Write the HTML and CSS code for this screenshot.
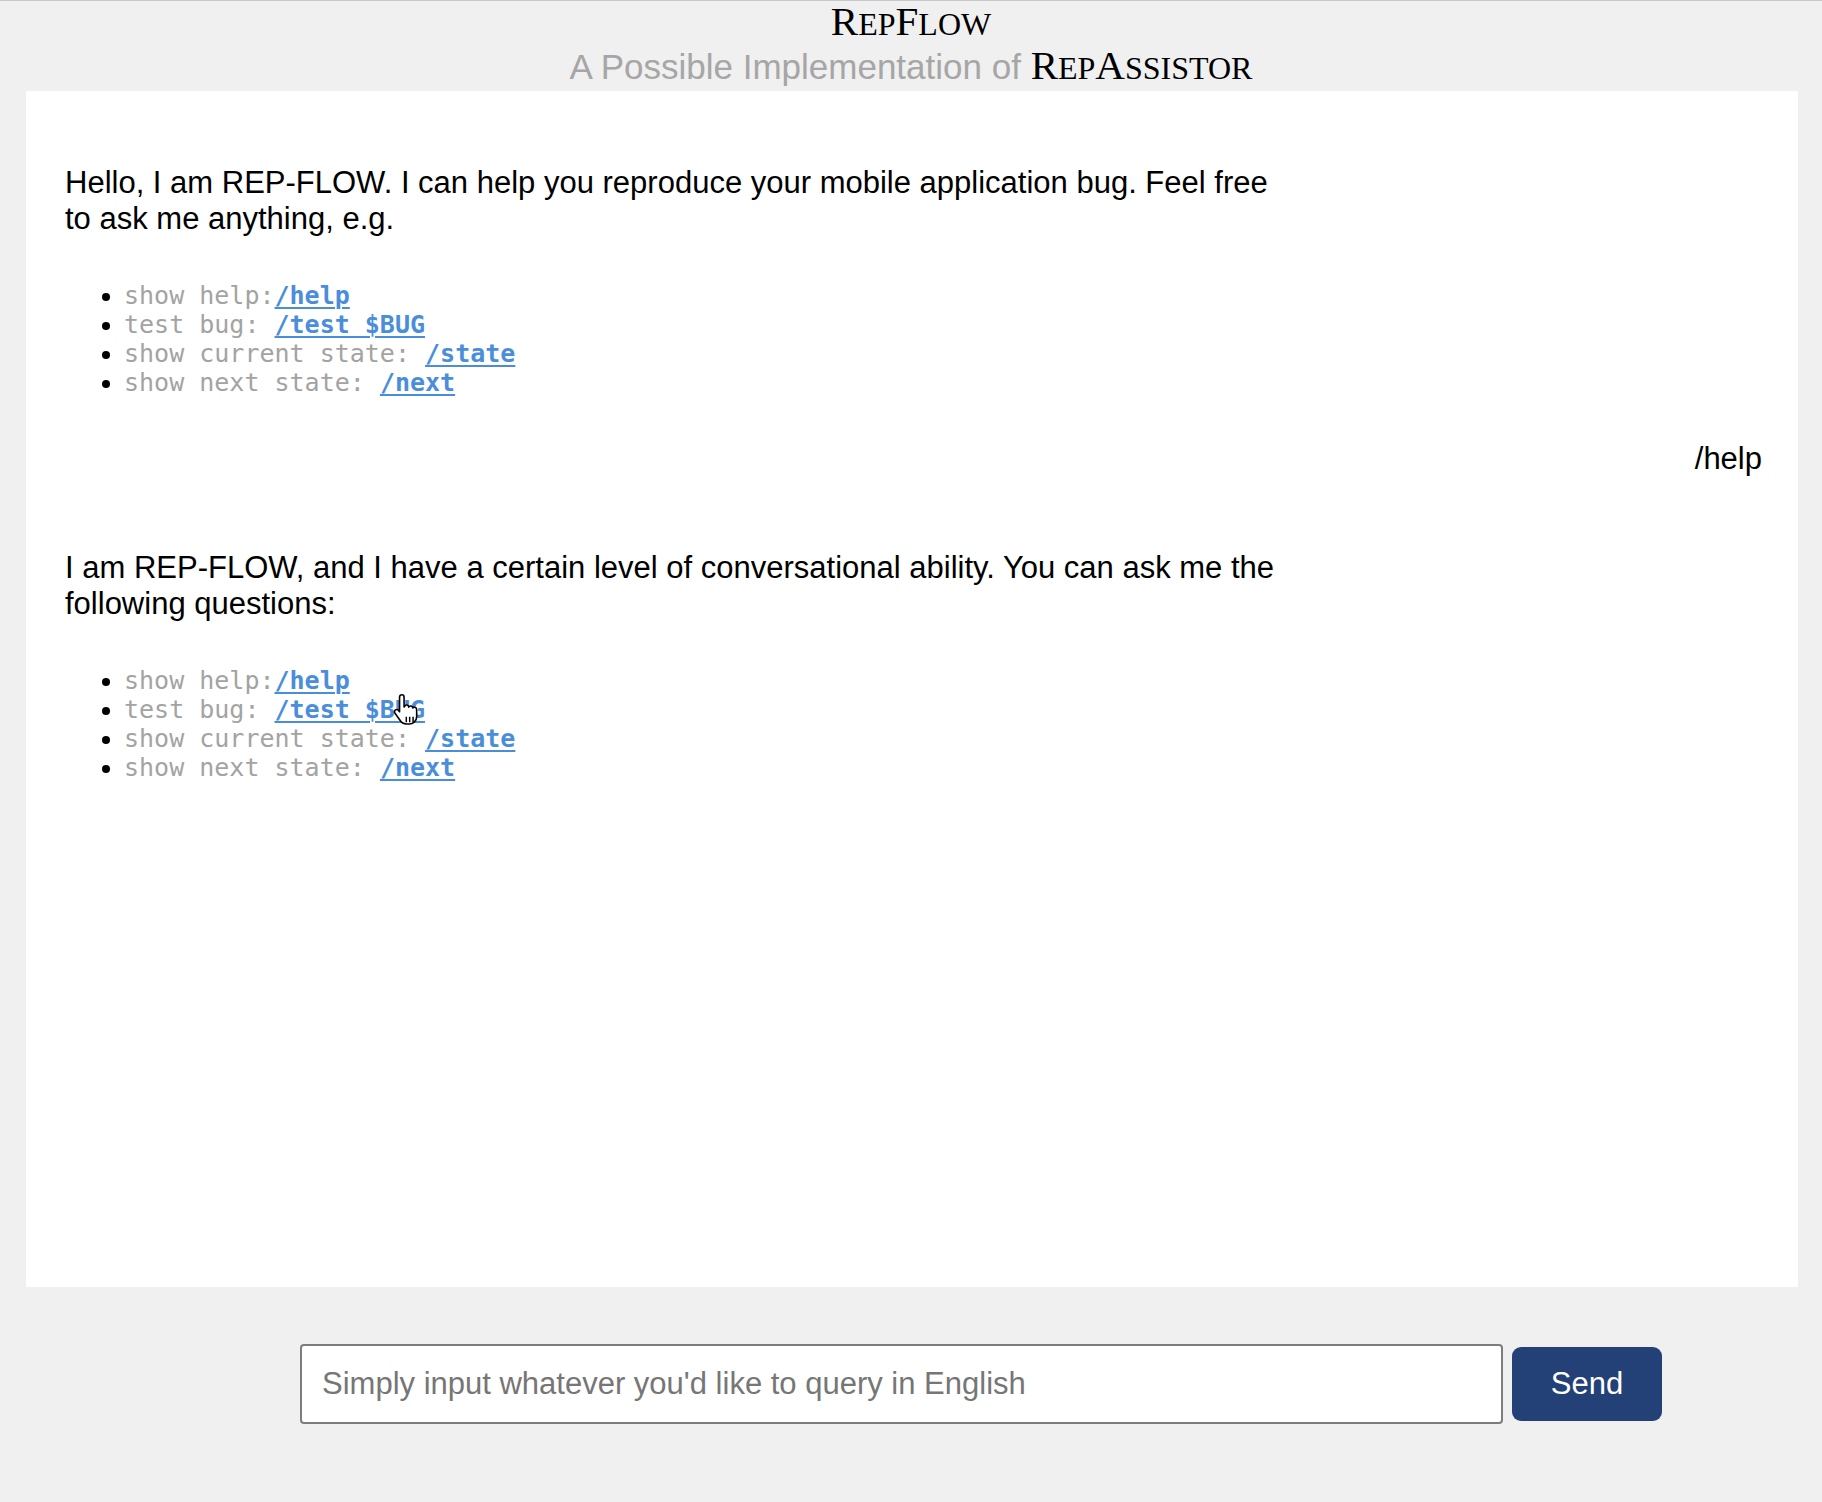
FILE: index.html
```html
<!DOCTYPE html>
<html lang="en">
<head>
<meta charset="utf-8">
<title>RepFlow</title>
<link rel="stylesheet" href="styles.css">
</head>
<body>
<header class="top">
  <div class="title">R<span class="sc">ep</span>F<span class="sc">low</span></div>
  <div class="subtitle"><span class="sub-sans">A Possible Implementation of</span> <span class="brand">R<span class="sc">ep</span>A<span class="sc">ssistor</span></span></div>
</header>

<main class="chat">
  <div class="msg bot">
    <p>Hello, I am REP-FLOW. I can help you reproduce your mobile application bug. Feel free to ask me anything, e.g.</p>
    <ul class="cmds">
      <li>show help:<a href="#">/help</a></li>
      <li>test bug: <a href="#">/test $BUG</a></li>
      <li>show current state: <a href="#">/state</a></li>
      <li>show next state: <a href="#">/next</a></li>
    </ul>
  </div>
  <div class="msg user"><span>/help</span></div>
  <div class="msg bot">
    <p>I am REP-FLOW, and I have a certain level of conversational ability. You can ask me the following questions:</p>
    <ul class="cmds">
      <li>show help:<a href="#">/help</a></li>
      <li class="has-cursor">test bug: <a href="#">/test $BUG</a><svg class="cursor" width="32" height="36" viewBox="0 0 28 32"><path d="M8.5 1.5c1.1 0 2 .9 2 2v9l.5-.5c.4-1 1.3-1.5 2.2-1.3.9.2 1.4 1 1.4 1.9.4-.8 1.3-1.2 2.2-1 .9.2 1.4 1 1.4 1.8.4-.6 1.1-.9 1.9-.8 1 .2 1.6 1 1.6 2v6.4c0 3.8-3 6.5-6.6 6.5h-2.6c-2.4 0-4.4-1.3-5.6-3.3L2.3 17.8c-.6-1-.3-2.2.6-2.8.9-.5 2-.3 2.7.5l.9 1.2V3.5c0-1.1.9-2 2-2z" fill="#fff" stroke="#000" stroke-width="1.4" stroke-linejoin="round"/><path d="M12.5 21v5M15.5 21v5M18.5 21v5" stroke="#000" stroke-width="1.3"/></svg></li>
      <li>show current state: <a href="#">/state</a></li>
      <li>show next state: <a href="#">/next</a></li>
    </ul>
  </div>
</main>

<form class="composer" onsubmit="return false">
  <input class="query" type="text" placeholder="Simply input whatever you'd like to query in English">
  <button class="send" type="submit">Send</button>
</form>
</body>
</html>
```

FILE: styles.css
```css
html, body {
  margin: 0;
  padding: 0;
}

body {
  background: #f0f0f0;
  border-top: 1px solid #c9c9c9;
  font-family: "Liberation Sans", Arial, sans-serif;
  color: #000;
  min-height: 1501px;
}

.top {
  text-align: center;
}

.title {
  font-family: "Liberation Serif", "Times New Roman", serif;
  font-size: 41px;
  line-height: 40px;
  height: 40px;
  color: #000;
}

.title .sc,
.brand .sc {
  font-size: 32px;
  text-transform: uppercase;
}

.subtitle {
  font-size: 35px;
  line-height: 48px;
  height: 50px;
}

.sub-sans {
  color: #a6a6a6;
  font-family: "Liberation Sans", Arial, sans-serif;
}

.brand {
  font-family: "Liberation Serif", "Times New Roman", serif;
  font-size: 41px;
  color: #000;
}

.chat {
  background: #fff;
  margin: 0 24px 0 26px;
  height: 1196px;
  padding: 0 36px 0 39px;
  box-sizing: border-box;
}

.msg.bot {
  padding-top: 73px;
}

.msg.bot:first-child {
  padding-top: 74px;
}

.msg p {
  margin: 0;
  max-width: 1226px;
  font-size: 31px;
  line-height: 36px;
}

.cmds {
  margin: 44px 0 0;
  padding-left: 59px;
  font-family: "DejaVu Sans Mono", "Liberation Mono", monospace;
  font-size: 25px;
  line-height: 29px;
  color: #a3a3a3;
}

.cmds li::marker {
  color: #000;
}

.cmds a {
  color: #4a8edb;
  font-weight: bold;
  text-decoration: underline;
  text-decoration-thickness: 2px;
  text-underline-offset: 3px;
}

.has-cursor {
  position: relative;
}

.cursor {
  position: absolute;
  left: 268px;
  top: -2px;
}

.msg.user {
  margin-top: 44px;
  text-align: right;
  font-size: 31px;
  line-height: 36px;
}

.composer {
  display: flex;
  align-items: center;
  gap: 9px;
  padding: 57px 0 0 300px;
  margin: 0;
}

.query {
  box-sizing: border-box;
  width: 1203px;
  height: 80px;
  border: 2px solid #7d7d7d;
  border-radius: 4px;
  padding: 0 20px;
  font-family: "Liberation Sans", Arial, sans-serif;
  font-size: 31px;
  color: #000;
  background: #fff;
  outline: none;
}

.query::placeholder {
  color: #767676;
}

.send {
  box-sizing: border-box;
  width: 150px;
  height: 74px;
  border: none;
  border-radius: 9px;
  background: #234176;
  color: #fff;
  font-family: "Liberation Sans", Arial, sans-serif;
  font-size: 31px;
  cursor: pointer;
}
```
